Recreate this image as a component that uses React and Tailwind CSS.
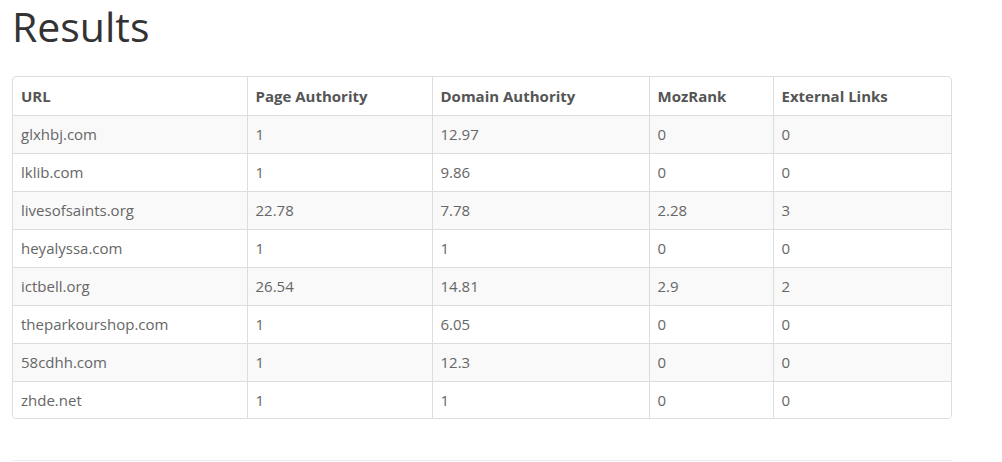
const rows = [
  ["glxhbj.com", "1", "12.97", "0", "0"],
  ["lklib.com", "1", "9.86", "0", "0"],
  ["livesofsaints.org", "22.78", "7.78", "2.28", "3"],
  ["heyalyssa.com", "1", "1", "0", "0"],
  ["ictbell.org", "26.54", "14.81", "2.9", "2"],
  ["theparkourshop.com", "1", "6.05", "0", "0"],
  ["58cdhh.com", "1", "12.3", "0", "0"],
  ["zhde.net", "1", "1", "0", "0"],
];

const heads = ["URL", "Page Authority", "Domain Authority", "MozRank", "External Links"];
const widths = ["w-[234px]", "w-[185px]", "w-[217px]", "w-[124px]", "w-[178px]"];

export default function App() {
  return (
    <div className="bg-white w-[1002px] h-[462px] overflow-hidden font-['Open_Sans',sans-serif] text-[15px]">
      <div className="w-[940px] ml-[12px]">
        <h1 className="-mt-[3px] text-[41px] leading-[58px] text-[#333] font-normal">Results</h1>
        <div className="mt-[21px] border border-[#ddd] rounded-[4px] overflow-hidden">
          <table className="w-full border-collapse table-fixed">
            <thead>
              <tr className="h-[38px]">
                {heads.map((h, i) => (
                  <th key={h} className={`${widths[i]} text-left font-bold text-[#555] px-[8px] ${i > 0 ? "border-l border-[#ddd]" : ""}`}>
                    {h}
                  </th>
                ))}
              </tr>
            </thead>
            <tbody>
              {rows.map((r, ri) => (
                <tr key={ri} className={`${ri === rows.length - 1 ? "h-[37px]" : "h-[38px]"} border-t border-[#ddd] ${ri % 2 === 0 ? "bg-[#f9f9f9]" : "bg-white"}`}>
                  {r.map((c, i) => (
                    <td key={i} className={`px-[8px] text-[#666] ${i > 0 ? "border-l border-[#ddd]" : ""}`}>
                      {c}
                    </td>
                  ))}
                </tr>
              ))}
            </tbody>
          </table>
        </div>
        <hr className="mt-[41px] border-t border-[#eee]" />
      </div>
    </div>
  );
}
